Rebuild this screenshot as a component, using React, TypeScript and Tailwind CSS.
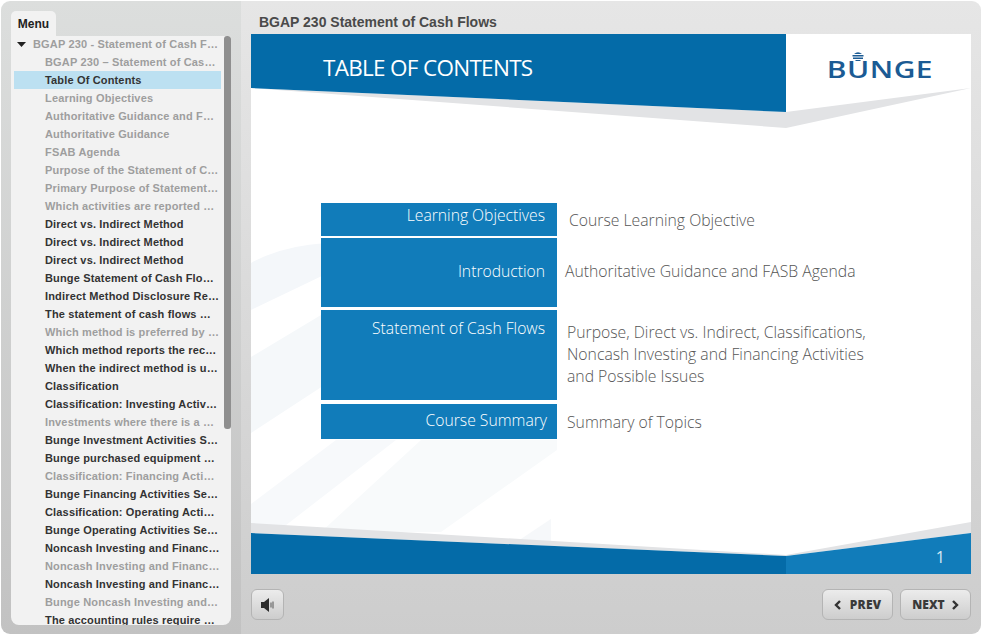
import React from 'react';

type MenuRow = { label: string; seen?: boolean; active?: boolean };

const menuRows: MenuRow[] = [
    { label: 'BGAP 230 – Statement of Cas…', seen: true },
    { label: 'Table Of Contents', active: true },
    { label: 'Learning Objectives', seen: true },
    { label: 'Authoritative Guidance and F…', seen: true },
    { label: 'Authoritative Guidance', seen: true },
    { label: 'FSAB Agenda', seen: true },
    { label: 'Purpose of the Statement of C…', seen: true },
    { label: 'Primary Purpose of Statement…', seen: true },
    { label: 'Which activities are reported …', seen: true },
    { label: 'Direct vs. Indirect Method' },
    { label: 'Direct vs. Indirect Method' },
    { label: 'Direct vs. Indirect Method' },
    { label: 'Bunge Statement of Cash Flo…' },
    { label: 'Indirect Method Disclosure Re…' },
    { label: 'The statement of cash flows …' },
    { label: 'Which method is preferred by …', seen: true },
    { label: 'Which method reports the rec…' },
    { label: 'When the indirect method is u…' },
    { label: 'Classification' },
    { label: 'Classification: Investing Activ…' },
    { label: 'Investments where there is a …', seen: true },
    { label: 'Bunge Investment Activities S…' },
    { label: 'Bunge purchased equipment …' },
    { label: 'Classification: Financing Acti…', seen: true },
    { label: 'Bunge Financing Activities Se…' },
    { label: 'Classification: Operating Acti…' },
    { label: 'Bunge Operating Activities Se…' },
    { label: 'Noncash Investing and Financ…' },
    { label: 'Noncash Investing and Financ…', seen: true },
    { label: 'Noncash Investing and Financ…' },
    { label: 'Bunge Noncash Investing and…', seen: true },
    { label: 'The accounting rules require …' },
];

const Sidebar: React.FC = () => (
    <div className="w-[240px] h-full shrink-0 pl-[10px] pt-[10px] pb-[9px] pr-[10px] flex flex-col bg-gradient-to-b from-[#dcdedd] to-[#c2c2c2]">
        <div className="w-[45px] h-[25px] bg-[#f2f2f2] rounded-t-[5px] flex items-center justify-center text-[12px] font-bold text-[#222]">
            Menu
        </div>
        <div className="relative flex-1 bg-[#f2f2f2] rounded-b-[8px] rounded-tr-[3px] overflow-hidden">
            <div className="h-[17px] flex items-center text-[11px] tracking-[0.16px] font-bold text-[#9e9e9e] whitespace-nowrap">
                <svg width="9" height="5" viewBox="0 0 9 5" className="ml-[6px] mr-[7px]">
                    <path d="M0 0h9L4.5 5z" fill="#222" />
                </svg>
                <span>BGAP 230 - Statement of Cash F…</span>
            </div>
            {menuRows.map((row, i) => (
                <div
                    key={i}
                    className={`h-[18px] ml-[3px] w-[207px] pl-[31px] flex items-center text-[11px] tracking-[0.16px] font-bold whitespace-nowrap ${row.active ? 'bg-[#bce0f1]' : ''} ${row.seen ? 'text-[#9e9e9e]' : 'text-[#333]'}`}
                >
                    {row.label}
                </div>
            ))}
            <div className="absolute right-0 top-0 w-[7px] h-[393px] bg-[#8f8f8f] rounded-[3px]" />
        </div>
    </div>
);

const tocRows = [
    { title: 'Learning Objectives', rowH: 'h-[33px]', mb: 'mb-[2px]', pt: 'pt-[1px] pr-[12px]', descPt: 'pt-[6px]', descMl: 'ml-[12px]', desc: ['Course Learning Objective'] },
    { title: 'Introduction', rowH: 'h-[69px]', mb: 'mb-[3px]', pt: 'pt-[22px] pr-[12px]', descPt: 'pt-[22px]', descMl: 'ml-[8px]', desc: ['Authoritative Guidance and FASB Agenda'] },
    { title: 'Statement of Cash Flows', rowH: 'h-[90px]', mb: 'mb-[4px]', pt: 'pt-[7px] pr-[12px]', descPt: 'pt-[11px]', descMl: 'ml-[10px]', desc: ['Purpose, Direct vs. Indirect, Classifications,', 'Noncash Investing and Financing Activities', 'and Possible Issues'] },
    { title: 'Course Summary', rowH: 'h-[35px]', mb: '', pt: 'pt-[5px] pr-[10px]', descPt: 'pt-[7px]', descMl: 'ml-[10px]', desc: ['Summary of Topics'] },
];

const SlideArt: React.FC = () => (
    <svg className="absolute inset-0" width="720" height="540" viewBox="0 0 720 540">
        {/* faint watermark stripes */}
        <path d="M0 229Q30 212 75 209L75 240L0 276z" fill="#f4f7fa" />
        <path d="M0 323L75 278V350L0 399z" fill="#f5f8fa" />
        <path d="M0 470L85 406H145L30 495H0z" fill="#f7f9fb" />
        <path d="M170 406H306V416L190 498H70z" fill="#f8fafb" />
        <path d="M270 505L300 485V512H262z" fill="#f6f8fa" />
        {/* header */}
        <path d="M0 54L535 94L720 54L535 78z" fill="#e2e3e5" />
        <path d="M0 54L535 78V0H0z" fill="#046ba8" />
        {/* footer */}
        <path d="M0 489L535 521L720 488V499L535 522L0 499z" fill="#e2e3e5" />
        <path d="M0 499L535 522V540H0z" fill="#046ba8" />
        <path d="M535 522L720 499V540H535z" fill="#117cba" />
    </svg>
);

const BungeLogo: React.FC = () => (
    <div className="absolute left-[576px] top-[18px] w-[105px] h-[26px] flex items-end justify-center">
        <svg className="absolute left-[25px] top-0" width="12" height="9" viewBox="0 0 12 9">
            <path d="M2 2Q6-1.5 10 2z" fill="#1b5b94" />
            <path d="M.5 3h11v1.5H.5z" fill="#1b5b94" />
            <path d="M1 5.5h10V7H1z" fill="#1b5b94" />
            <path d="M3.5 8h5v1h-5z" fill="#1b5b94" />
        </svg>
        <span className="text-[23px] leading-[17px] font-semibold text-[#1b5b94] tracking-[0.4px] scale-x-[1.3]">BUNGE</span>
    </div>
);

const Slide: React.FC = () => (
    <div className="relative w-[720px] h-[540px] bg-white overflow-hidden font-['Open_Sans',sans-serif]">
        <SlideArt />
        <BungeLogo />
        <div className="relative pl-[72px] pt-[17px] h-[169px] text-[22.5px] tracking-[-0.7px] leading-[34px] text-white">TABLE OF CONTENTS</div>
        <div className="relative ml-[70px] flex flex-col">
            {tocRows.map((row) => (
                <div key={row.title} className={`flex ${row.rowH} ${row.mb}`}>
                    <div className={`w-[236px] shrink-0 bg-[#117cba] text-right text-[15.7px] leading-[22px] font-light text-white ${row.pt}`}>
                        {row.title}
                    </div>
                    <div className={`${row.descMl} ${row.descPt} text-[15.75px] leading-[22px] font-light text-[#555] whitespace-nowrap`}>
                        {row.desc.map((line) => (
                            <div key={line}>{line}</div>
                        ))}
                    </div>
                </div>
            ))}
        </div>
        <div className="absolute right-[26px] bottom-[6px] text-[16px] leading-[22px] text-[#d8e9f4]">1</div>
    </div>
);

const btnClasses = 'h-[31px] flex items-center justify-center border border-[#b4b4b4] rounded-[6px] bg-gradient-to-b from-[#ececec] to-[#cdcdcd]';

const Chevron: React.FC<{ flip?: boolean }> = ({ flip }) => (
    <svg width="8" height="10" viewBox="0 0 8 10" className={flip ? 'rotate-180' : ''}>
        <path d="M2 1l4 4-4 4" fill="none" stroke="#333" strokeWidth="2.4" />
    </svg>
);

const Footer: React.FC = () => (
    <div className="flex-1 flex items-start justify-between pt-[15px]">
        <button className={`${btnClasses} w-[33px]`}>
            <svg width="16" height="14" viewBox="0 0 16 14">
                <path d="M1 4h3l5-4v14l-5-4H1z" fill="#2c2c2c" />
                <path d="M11 4.5v5M13 3.5v7" stroke="#555" strokeWidth="1" />
            </svg>
        </button>
        <div className="flex gap-[7px] font-['Open_Sans',sans-serif] text-[12px] font-extrabold text-[#3a3a3a]">
            <button className={`${btnClasses} w-[71px] gap-[8px] tracking-[0.2px]`}>
                <Chevron flip />
                PREV
            </button>
            <button className={`${btnClasses} w-[71px] gap-[6px]`}>
                NEXT
                <Chevron />
            </button>
        </div>
    </div>
);

export default function App() {
    return (
        <div className="w-[982px] h-[636px] bg-white p-[1px] pb-[2px] font-['Liberation_Sans',sans-serif]">
            <div className="w-[980px] h-[633px] rounded-[9px] overflow-hidden flex">
                <Sidebar />
                <div className="flex-1 h-full pl-[10px] pr-[10px] flex flex-col bg-gradient-to-b from-[#e6e6e6] to-[#cdcdcd]">
                    <div className="h-[33px] pl-[8px] pt-[12px] text-[14px] leading-[18px] font-bold text-[#4a4a4a]">
                        BGAP 230 Statement of Cash Flows
                    </div>
                    <Slide />
                    <Footer />
                </div>
            </div>
        </div>
    );
}
